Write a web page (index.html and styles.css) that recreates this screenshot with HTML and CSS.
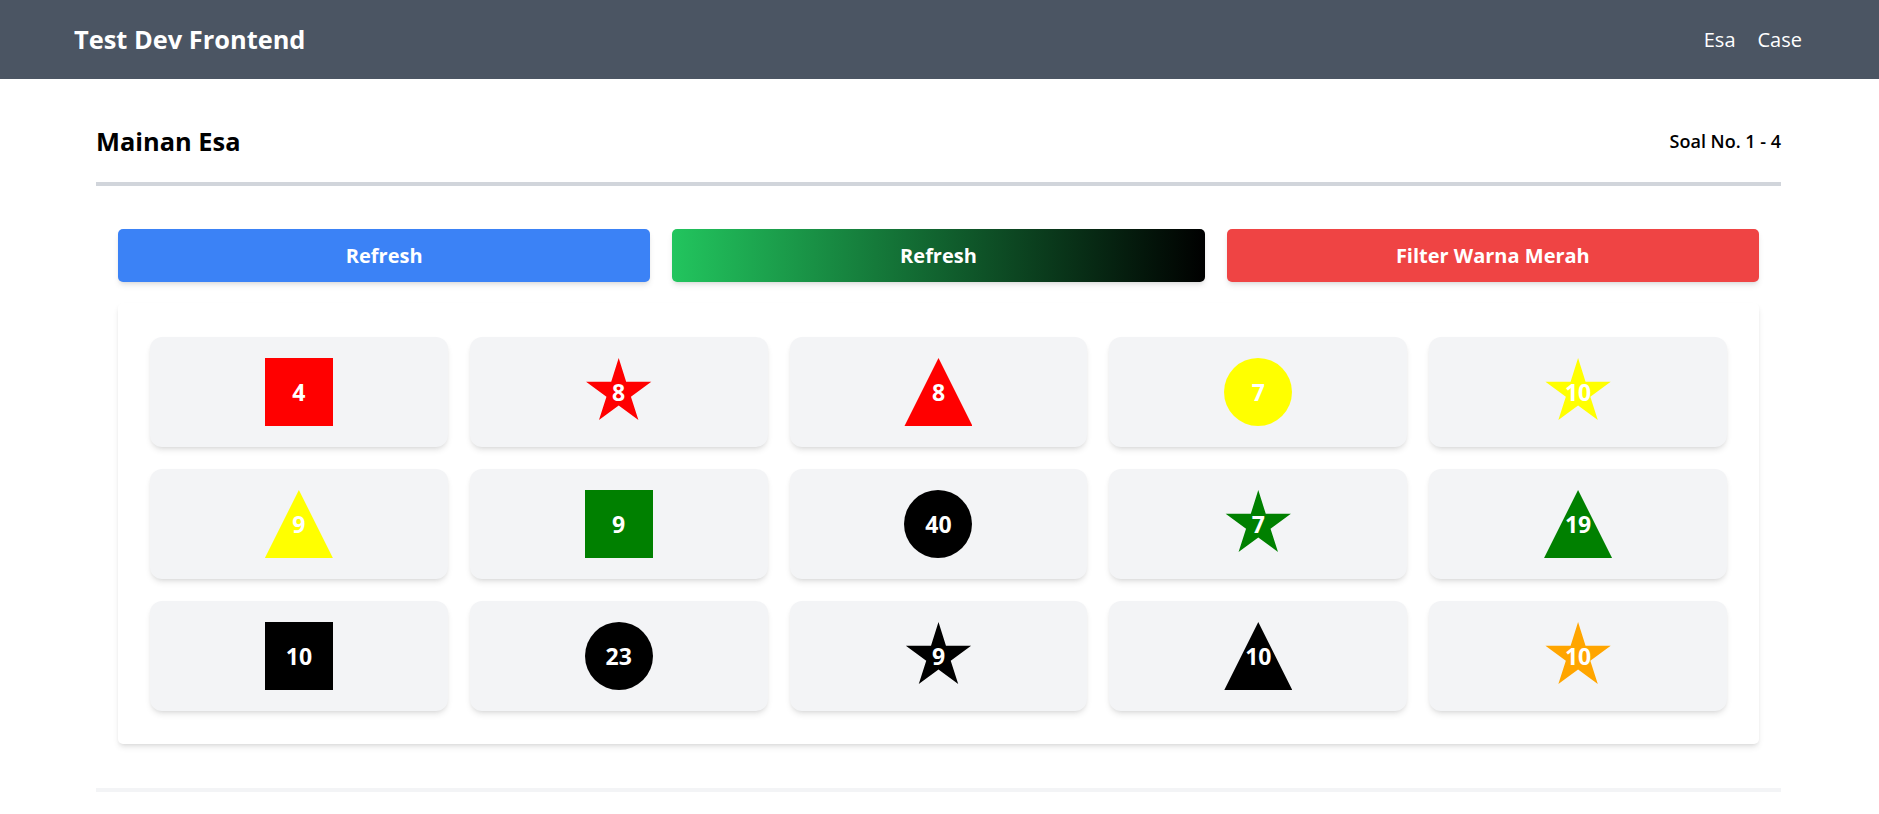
FILE: index.html
```html
<!DOCTYPE html>
<html lang="id">
<head>
<meta charset="utf-8">
<title>Test Dev Frontend</title>
<link rel="stylesheet" href="styles.css">
</head>
<body>
<header class="topbar">
  <div class="brand">Test Dev Frontend</div>
  <nav class="nav">
    <a class="nav-link" href="#">Esa</a>
    <a class="nav-link" href="#">Case</a>
  </nav>
</header>
<main class="container">
  <div class="titlebar">
    <h1 class="page-title">Mainan Esa</h1>
    <span class="page-sub">Soal No. 1 - 4</span>
  </div>
  <section class="content">
    <div class="actions">
      <button class="btn btn-blue">Refresh</button>
      <button class="btn btn-gradient">Refresh</button>
      <button class="btn btn-red">Filter Warna Merah</button>
    </div>
    <div class="panel">
      <div class="grid">
        <div class="card"><div class="shape square red">4</div></div>
        <div class="card"><div class="shape star red">8</div></div>
        <div class="card"><div class="shape triangle red">8</div></div>
        <div class="card"><div class="shape circle yellow">7</div></div>
        <div class="card"><div class="shape star yellow">10</div></div>

        <div class="card"><div class="shape triangle yellow">9</div></div>
        <div class="card"><div class="shape square green">9</div></div>
        <div class="card"><div class="shape circle black">40</div></div>
        <div class="card"><div class="shape star green">7</div></div>
        <div class="card"><div class="shape triangle green">19</div></div>

        <div class="card"><div class="shape square black">10</div></div>
        <div class="card"><div class="shape circle black">23</div></div>
        <div class="card"><div class="shape star black">9</div></div>
        <div class="card"><div class="shape triangle black">10</div></div>
        <div class="card"><div class="shape star orange">10</div></div>
      </div>
    </div>
  </section>
  <div class="footer-line"></div>
</main>
</body>
</html>
```

FILE: styles.css
```css
* { box-sizing: border-box; }

body {
  margin: 0;
  font-family: "Open Sans", "Noto Sans", sans-serif;
  color: #000;
  background: #fff;
}

.topbar {
  height: 79px;
  background: #4b5563;
  display: flex;
  align-items: center;
  justify-content: space-between;
  padding: 0 77px 0 74px;
  color: #fff;
}

.brand {
  font-size: 25.4px;
  font-weight: 700;
  line-height: 1;
}

.nav {
  display: flex;
  gap: 22px;
}

.nav-link {
  color: #fff;
  text-decoration: none;
  font-size: 20px;
  line-height: 1;
}

.container {
  padding: 0 98px 0 96px;
}

.titlebar {
  display: flex;
  align-items: center;
  justify-content: space-between;
  padding: 42px 0 21px;
  border-bottom: 4px solid #d1d5db;
}

.page-title {
  margin: 0;
  font-size: 25.4px;
  font-weight: 700;
  line-height: 40px;
}

.page-sub {
  font-size: 18px;
  font-weight: 600;
  line-height: 40px;
}

.content {
  padding: 43px 22px 0;
}

.actions {
  display: grid;
  grid-template-columns: repeat(3, 1fr);
  gap: 22px;
}

.btn {
  height: 53px;
  border: none;
  border-radius: 5px;
  color: #fff;
  font-family: inherit;
  font-size: 20px;
  font-weight: 700;
  box-shadow: 0 4px 6px -1px rgba(0,0,0,0.1), 0 2px 4px -2px rgba(0,0,0,0.1);
}

.btn-blue { background: #3b82f6; }
.btn-red { background: #ef4444; }
.btn-gradient { background: linear-gradient(to right, #22c55e, #000); }

.panel {
  margin-top: 21px;
  background: #fff;
  border-radius: 5px;
  padding: 34px 32px 33px;
  box-shadow: 0 4px 6px -1px rgba(0,0,0,0.1), 0 2px 4px -2px rgba(0,0,0,0.1);
}

.grid {
  display: grid;
  grid-template-columns: repeat(5, 1fr);
  gap: 22px;
}

.card {
  height: 110px;
  background: #f3f4f6;
  border-radius: 12px;
  display: flex;
  align-items: center;
  justify-content: center;
  box-shadow: 0 4px 6px -1px rgba(0,0,0,0.1), 0 2px 4px -2px rgba(0,0,0,0.1);
}

.shape {
  width: 68px;
  height: 68px;
  display: flex;
  align-items: center;
  justify-content: center;
  color: #fff;
  font-size: 23px;
  font-weight: 700;
  line-height: 1;
}

.circle { border-radius: 50%; }
.triangle { clip-path: polygon(50% 0, 100% 100%, 0 100%); }
.star {
  clip-path: polygon(50% 0%, 61% 35%, 98% 35%, 68% 57%, 79% 91%, 50% 70%, 21% 91%, 32% 57%, 2% 35%, 39% 35%);
}

.red { background: #ff0000; }
.yellow { background: #ffff00; }
.green { background: #008000; }
.black { background: #000; }
.orange { background: #ffa500; }

.footer-line {
  margin-top: 44px;
  height: 4px;
  background: #f3f4f6;
}
```
